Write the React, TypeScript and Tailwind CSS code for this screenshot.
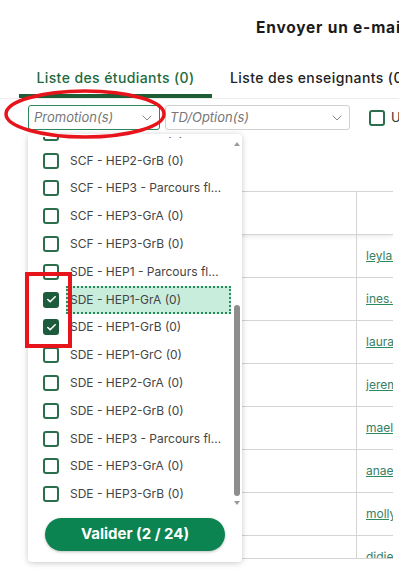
import React from 'react';
import { ChevronDown, Check } from 'lucide-react';

const items = [
  { label: 'SCF - HEP2-GrA (0)', checked: false },
  { label: 'SCF - HEP2-GrB (0)', checked: false },
  { label: 'SCF - HEP3 - Parcours fl…', checked: false },
  { label: 'SCF - HEP3-GrA (0)', checked: false },
  { label: 'SCF - HEP3-GrB (0)', checked: false },
  { label: 'SDE - HEP1 - Parcours fl…', checked: false },
  { label: 'SDE - HEP1-GrA (0)', checked: true, focused: true },
  { label: 'SDE - HEP1-GrB (0)', checked: true },
  { label: 'SDE - HEP1-GrC (0)', checked: false },
  { label: 'SDE - HEP2-GrA (0)', checked: false },
  { label: 'SDE - HEP2-GrB (0)', checked: false },
  { label: 'SDE - HEP3 - Parcours fl…', checked: false },
  { label: 'SDE - HEP3-GrA (0)', checked: false },
  { label: 'SDE - HEP3-GrB (0)', checked: false },
];

const emails = [
  'leyla.benali@etu.fr',
  'ines.martin@etu.fr',
  'laura.petit@etu.fr',
  'jeremy.durand@etu.fr',
  'maelle.robert@etu.fr',
  'anaelle.morel@etu.fr',
  'molly.garcia@etu.fr',
  'didier.faure@etu.fr',
];

const Box: React.FC<{ checked: boolean }> = ({ checked }) =>
  checked ? (
    <div className="w-[16px] h-[16px] rounded-[3px] bg-[#1c5c3c] flex items-center justify-center shrink-0">
      <Check size={11} strokeWidth={3.5} color="white" />
    </div>
  ) : (
    <div className="w-[16px] h-[16px] rounded-[3px] border-2 border-[#2a6e4b] bg-white shrink-0" />
  );

export default function App() {
  return (
    <div className="relative w-[399px] h-[584px] overflow-hidden bg-white font-['Inter','Liberation_Sans',sans-serif]">
      <div className="w-[700px]">
        <h1 className="mt-[18px] pl-[256px] text-[15.5px] leading-[20px] font-bold tracking-[0.8px] text-[#1b1b1b] whitespace-nowrap">
          Envoyer un e-mail aux étudiants
        </h1>

        <div className="mt-[26px] flex pl-[19px] border-b border-[#ececec]">
          <div className="w-[193px] text-center pt-[4px] pb-[6px] leading-[20px] text-[14px] font-medium tracking-[0.4px] text-[#1d6a3e] border-b-[4px] border-[#1d5e36] whitespace-nowrap">
            Liste des étudiants (0)
          </div>
          <div className="pl-[18px] pt-[4px] pb-[6px] leading-[20px] text-[14px] font-medium tracking-[0.4px] text-[#222] whitespace-nowrap">
            Liste des enseignants (0)
          </div>
        </div>

        <div className="mt-[6px] pl-[28px] flex items-center h-[25px]">
          <div className="w-[132px] h-[25px] border border-[#2a8a5c] rounded-[3px] flex items-center justify-between pl-[5px] pr-[4px]">
            <span className="italic text-[13px] text-[#777]">Promotion(s)</span>
            <ChevronDown size={16} strokeWidth={1.5} color="#888" />
          </div>
          <div className="ml-[5px] w-[185px] h-[25px] border border-[#d0d0d0] rounded-[3px] flex items-center justify-between pl-[4px] pr-[4px]">
            <span className="italic text-[13px] text-[#777]">TD/Option(s)</span>
            <ChevronDown size={16} strokeWidth={1.5} color="#888" />
          </div>
          <div className="ml-[19px] w-[16px] h-[16px] rounded-[3px] border-2 border-[#2a6e4b]" />
          <span className="ml-[6px] text-[13px] text-[#333] whitespace-nowrap">Uniquement mes étudiants</span>
        </div>

        <div className="mt-[61px] ml-[30px] w-[363px] h-[368px] overflow-hidden border-b border-[#d4d4d4]">
          <div className="flex h-[44px] border-t border-b border-[#d4d4d4] shadow-[0_2px_4px_rgba(0,0,0,0.08)]">
            <div className="w-[327px] border-r border-[#d4d4d4]" />
            <div className="flex-1" />
          </div>
          {emails.map((email, i) => (
            <div key={i} className="flex h-[43px] border-b border-[#d4d4d4]">
              <div className="w-[327px] border-r border-[#d4d4d4] shrink-0" />
              <div className="pl-[9px] flex items-center">
                <a className="text-[12px] text-[#3a8062] underline decoration-[#2b8a5e] whitespace-nowrap">{email}</a>
              </div>
            </div>
          ))}
        </div>
      </div>

      {/* dropdown panel */}
      <div className="absolute left-[28px] top-[134px] w-[214px] h-[428px] pt-[3px] bg-white rounded-[4px] shadow-[0_1px_6px_rgba(0,0,0,0.22)] flex flex-col">
        <div className="flex h-[372px] overflow-hidden">
          <div className="flex-1 overflow-hidden">
            <div className="mt-[-18px]">
              {items.map((it, i) => (
                <div key={i} className="h-[27.8px] flex items-center pl-[15px]">
                  <Box checked={it.checked} />
                  <div
                    className={
                      it.focused
                        ? 'ml-[7px] flex-1 h-full flex items-center pl-[4px] bg-[#c9eddc] outline-2 outline-dotted outline-[#2b8a5c] -outline-offset-2'
                        : 'ml-[7px] flex-1 h-full flex items-center pl-[4px]'
                    }
                  >
                    <span className="text-[12px] text-[#444] whitespace-nowrap truncate">{it.label}</span>
                  </div>
                </div>
              ))}
            </div>
          </div>
          <div className="w-[11px] flex flex-col items-center pt-[5px]">
            <div className="w-0 h-0 border-l-[3px] border-r-[3px] border-b-[4px] border-l-transparent border-r-transparent border-b-[#9a9a9a]" />
            <div className="mt-[159px] w-[6px] h-[191px] rounded-full bg-[#8e8e8e]" />
            <div className="mt-[5px] w-0 h-0 border-l-[3px] border-r-[3px] border-t-[4px] border-l-transparent border-r-transparent border-t-[#9a9a9a]" />
          </div>
        </div>
        <div className="mt-[9px] flex justify-center">
          <button className="w-[180px] h-[33px] rounded-full bg-[#0b8451] text-white text-[15px] font-bold shadow-[0_1px_3px_rgba(0,0,0,0.25)]">
            Valider (2 / 24)
          </button>
        </div>
      </div>

      {/* red annotations */}
      <svg className="absolute left-0 top-0 pointer-events-none" width="399" height="584">
        <ellipse cx="85" cy="114" rx="79" ry="23" fill="none" stroke="#e8141c" strokeWidth="3.5" />
        <rect x="27" y="274" width="43" height="72" fill="none" stroke="#e8141c" strokeWidth="4" />
      </svg>
    </div>
  );
}
